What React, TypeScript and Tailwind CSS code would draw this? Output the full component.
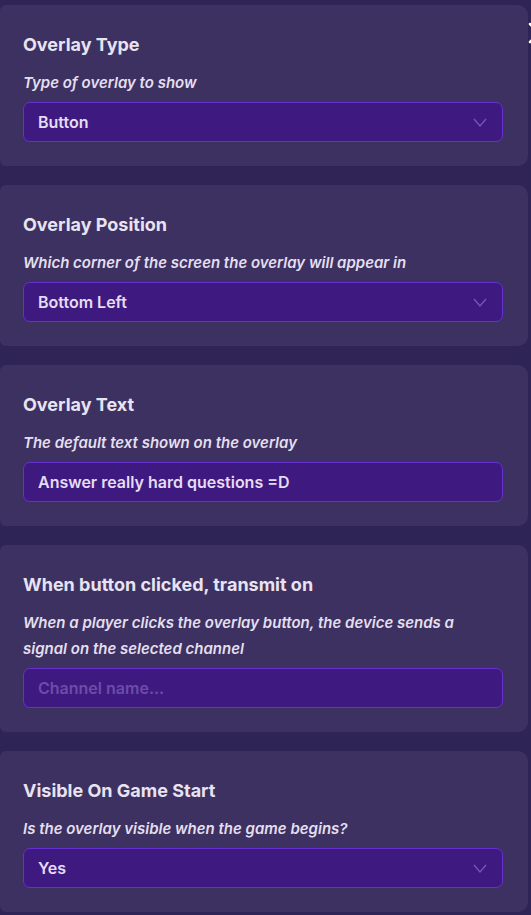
import React from "react";

type Field = {
  title: string;
  desc: string;
  kind: "select" | "text" | "placeholder";
  value: string;
};

const fields: Field[] = [
  { title: "Overlay Type", desc: "Type of overlay to show", kind: "select", value: "Button" },
  {
    title: "Overlay Position",
    desc: "Which corner of the screen the overlay will appear in",
    kind: "select",
    value: "Bottom Left",
  },
  { title: "Overlay Text", desc: "The default text shown on the overlay", kind: "text", value: "Answer really hard questions =D" },
  {
    title: "When button clicked, transmit on",
    desc: "When a player clicks the overlay button, the device sends a signal on the selected channel",
    kind: "placeholder",
    value: "Channel name...",
  },
  {
    title: "Visible On Game Start",
    desc: "Is the overlay visible when the game begins?",
    kind: "select",
    value: "Yes",
  },
];

function Chevron() {
  return (
    <svg width="14" height="9" viewBox="0 0 14 9" fill="none" className="shrink-0">
      <path d="M1 1 L7 8 L13 1" stroke="#7657b4" strokeWidth="1.3" />
    </svg>
  );
}

function Card({ f }: { f: Field }) {
  return (
    <div className="w-[528px] rounded-r-[10px] rounded-l-[6px] bg-[#3d3161] pl-[23px] pr-[25px] pt-[28px] pb-[24px]">
      <div className="text-[18px] leading-[24px] font-bold text-[#e8e3f1]">{f.title}</div>
      <div className="mt-[13px] max-w-[462px] text-[15px] leading-[26px] font-semibold italic text-[#e4dfee]">
        {f.desc}
      </div>
      <div className="mt-[6px] flex h-[40px] items-center justify-between rounded-[7px] border border-[#6530cf] bg-[#3e1a80] pl-[14px] pr-[15px]">
        <span
          className={
            f.kind === "placeholder"
              ? "text-[16px] font-semibold text-[#6d4ca9]"
              : "text-[16px] font-semibold text-[#e6dcf4]"
          }
        >
          {f.value}
        </span>
        {f.kind === "select" && <Chevron />}
      </div>
    </div>
  );
}

export default function App() {
  return (
    <div
      className="relative h-[915px] w-[531px] overflow-hidden bg-[#2e2456]"
      style={{ fontFamily: "Inter, 'Noto Sans', sans-serif" }}
    >
      <div className="flex flex-col gap-[19px] pt-[5px]">
        {fields.map((f) => (
          <Card key={f.title} f={f} />
        ))}
      </div>
      <svg className="absolute left-[528px] top-[20px]" width="24" height="26" viewBox="0 0 24 26">
        <path d="M2 4 L20 22 M2 22 L20 4" stroke="#ffffff" strokeWidth="2.5" strokeLinecap="round" />
      </svg>
    </div>
  );
}
